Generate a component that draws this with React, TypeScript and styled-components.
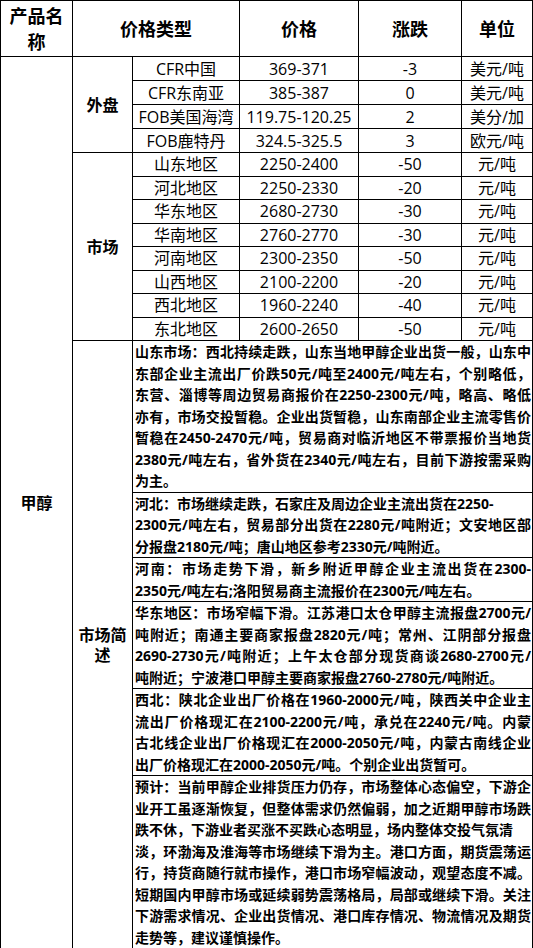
import React from "react";
import styled, { createGlobalStyle } from "styled-components";

const GlobalStyle = createGlobalStyle`
  html, body {
    margin: 0;
    padding: 0;
    background: #ffffff;
  }
  body {
    font-family: "Open Sans", "Noto Sans CJK SC", sans-serif;
    color: #000000;
  }
`;

const Table = styled.table`
  border-collapse: collapse;
  table-layout: fixed;
  width: 532px;
`;

const Row = styled.tr<{ $h: number }>`
  height: ${(p) => p.$h}px;
`;

const HeadCell = styled.th`
  border: 1px solid #000;
  padding: 0 2px;
  font-size: 18px;
  font-weight: 700;
  line-height: 26px;
  text-align: center;
  vertical-align: middle;
`;

const Cell = styled.td`
  border: 1px solid #000;
  padding: 0;
  font-size: 16px;
  font-weight: 400;
  line-height: 20px;
  text-align: center;
  vertical-align: middle;
  white-space: nowrap;
`;

const LabelCell = styled.td`
  border: 1px solid #000;
  padding: 0 2px;
  font-size: 16px;
  font-weight: 700;
  line-height: 20px;
  text-align: center;
  vertical-align: middle;
`;

const NoteCell = styled.td`
  border: 1px solid #000;
  padding: 0 1px 0 2px;
  font-size: 14px;
  font-weight: 700;
  line-height: 21.5px;
  text-align: left;
  vertical-align: middle;
`;

const Line = styled.span<{ $fill?: boolean }>`
  display: block;
  white-space: nowrap;
  text-align: ${(p) => (p.$fill ? "justify" : "left")};
  text-align-last: ${(p) => (p.$fill ? "justify" : "left")};
`;

const outer: [string, string, string, string][] = [
  ["CFR中国", "369-371", "-3", "美元/吨"],
  ["CFR东南亚", "385-387", "0", "美元/吨"],
  ["FOB美国海湾", "119.75-120.25", "2", "美分/加"],
  ["FOB鹿特丹", "324.5-325.5", "3", "欧元/吨"],
];

const market: [string, string, string][] = [
  ["山东地区", "2250-2400", "-50"],
  ["河北地区", "2250-2330", "-20"],
  ["华东地区", "2680-2730", "-30"],
  ["华南地区", "2760-2770", "-30"],
  ["河南地区", "2300-2350", "-50"],
  ["山西地区", "2100-2200", "-20"],
  ["西北地区", "1960-2240", "-40"],
  ["东北地区", "2600-2650", "-50"],
];

type NoteLine = [string, boolean];

const notes: NoteLine[][] = [
  [
    ["山东市场：西北持续走跌，山东当地甲醇企业出货一般，山东中", true],
    ["东部企业主流出厂价跌50元/吨至2400元/吨左右，个别略低，", true],
    ["东营、淄博等周边贸易商报价在2250-2300元/吨，略高、略低", true],
    ["亦有，市场交投暂稳。企业出货暂稳，山东南部企业主流零售价", true],
    ["暂稳在2450-2470元/吨，贸易商对临沂地区不带票报价当地货", true],
    ["2380元/吨左右，省外货在2340元/吨左右，目前下游按需采购", true],
    ["为主。", false],
  ],
  [
    ["河北：市场继续走跌，石家庄及周边企业主流出货在2250-", false],
    ["2300元/吨左右，贸易部分出货在2280元/吨附近；文安地区部", true],
    ["分报盘2180元/吨；唐山地区参考2330元/吨附近。", false],
  ],
  [
    ["河南：市场走势下滑，新乡附近甲醇企业主流出货在2300-", true],
    ["2350元/吨左右;洛阳贸易商主流报价在2300元/吨左右。", false],
  ],
  [
    ["华东地区：市场窄幅下滑。江苏港口太仓甲醇主流报盘2700元/", true],
    ["吨附近；南通主要商家报盘2820元/吨；常州、江阴部分报盘", true],
    ["2690-2730元/吨附近；上午太仓部分现货商谈2680-2700元/", true],
    ["吨附近；宁波港口甲醇主要商家报盘2760-2780元/吨附近。", false],
  ],
  [
    ["西北：陕北企业出厂价格在1960-2000元/吨，陕西关中企业主", true],
    ["流出厂价格现汇在2100-2200元/吨，承兑在2240元/吨。内蒙", true],
    ["古北线企业出厂价格现汇在2000-2050元/吨，内蒙古南线企业", true],
    ["出厂价格现汇在2000-2050元/吨。个别企业出货暂可。", false],
  ],
  [
    ["预计：当前甲醇企业排货压力仍存，市场整体心态偏空，下游企", true],
    ["业开工虽逐渐恢复，但整体需求仍然偏弱，加之近期甲醇市场跌", true],
    ["跌不休，下游业者买涨不买跌心态明显，场内整体交投气氛清", false],
    ["淡，环渤海及淮海等市场继续下滑为主。港口方面，期货震荡运", true],
    ["行，持货商随行就市操作，港口市场窄幅波动，观望态度不减。", true],
    ["短期国内甲醇市场或延续弱势震荡格局，局部或继续下滑。关注", true],
    ["下游需求情况、企业出货情况、港口库存情况、物流情况及期货", true],
    ["走势等，建议谨慎操作。", false],
  ],
];

const marketHeights = [23.5, 23.5, 23.5, 23.5, 23.5, 23.5, 23.5, 23.5];

export default function App() {
  const totalRows = outer.length + market.length + notes.length;
  return (
    <>
      <GlobalStyle />
      <Table>
        <colgroup>
          <col style={{ width: 72 }} />
          <col style={{ width: 60 }} />
          <col style={{ width: 107 }} />
          <col style={{ width: 119 }} />
          <col style={{ width: 103 }} />
          <col style={{ width: 71 }} />
        </colgroup>
        <tbody>
          <Row $h={56}>
            <HeadCell>产品名称</HeadCell>
            <HeadCell colSpan={2}>价格类型</HeadCell>
            <HeadCell>价格</HeadCell>
            <HeadCell>涨跌</HeadCell>
            <HeadCell>单位</HeadCell>
          </Row>
          {outer.map((r, i) => (
            <Row $h={24} key={"o" + i}>
              {i === 0 && <LabelCell rowSpan={totalRows}>甲醇</LabelCell>}
              {i === 0 && <LabelCell rowSpan={outer.length}>外盘</LabelCell>}
              <Cell>{r[0]}</Cell>
              <Cell>{r[1]}</Cell>
              <Cell>{r[2]}</Cell>
              <Cell>{r[3]}</Cell>
            </Row>
          ))}
          {market.map((r, i) => (
            <Row $h={marketHeights[i]} key={"m" + i}>
              {i === 0 && <LabelCell rowSpan={market.length}>市场</LabelCell>}
              <Cell>{r[0]}</Cell>
              <Cell>{r[1]}</Cell>
              <Cell>{r[2]}</Cell>
              <Cell>元/吨</Cell>
            </Row>
          ))}
          {notes.map((p, i) => (
            <Row $h={0} key={"n" + i}>
              {i === 0 && <LabelCell rowSpan={notes.length}>市场简述</LabelCell>}
              <NoteCell colSpan={4}>
                {p.map((l, j) => (
                  <Line key={j} $fill={l[1]}>
                    {l[0]}
                  </Line>
                ))}
              </NoteCell>
            </Row>
          ))}
        </tbody>
      </Table>
    </>
  );
}
